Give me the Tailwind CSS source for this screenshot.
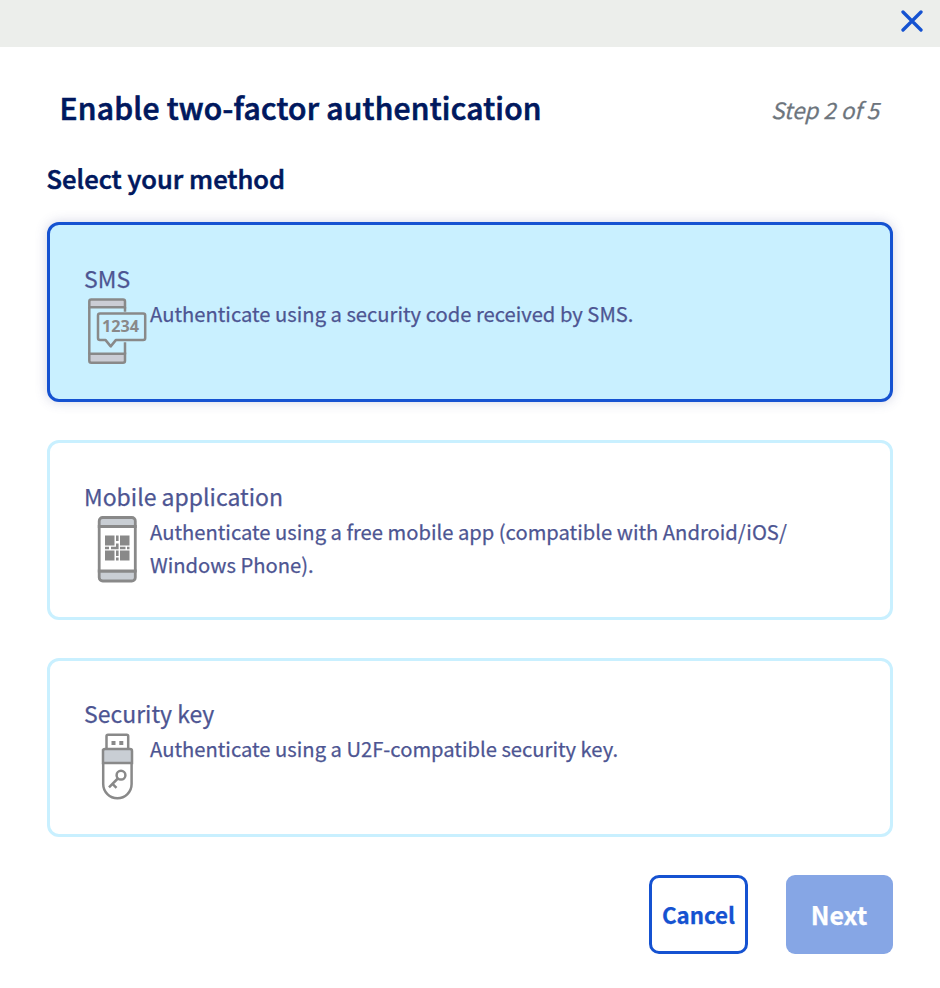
<!DOCTYPE html>
<html lang="en">
<head>
<meta charset="utf-8">
<title>Enable two-factor authentication</title>
<script src="https://cdn.jsdelivr.net/npm/@tailwindcss/browser@4"></script>
</head>
<body class="h-[988px] overflow-hidden bg-white font-['Noto_Sans_CJK_SC','Noto_Sans',sans-serif] text-[#4d5592] [-webkit-text-stroke:0.25px]">
<header class="flex h-[47px] items-start justify-end bg-[#eceeeb] pr-[17px] pt-[10px]">
  <button aria-label="Close"><svg class="block size-[22px]" viewBox="0 0 22 22" fill="none" stroke="#1552d1" stroke-width="3.3" stroke-linecap="round"><path d="M2 2 20 20M20 2 2 20"/></svg></button>
</header>
<main class="px-[47px] pt-[36px]">
  <div class="flex h-[48px] items-center justify-between px-[13px] whitespace-nowrap">
    <h1 class="-ml-[0.5px] text-[30px] leading-[48px] font-medium tracking-[0.24px] text-[#00185e] [-webkit-text-stroke:0.7px]">Enable two-factor authentication</h1>
    <span class="pt-[4px] pr-px text-[22.4px] leading-[40px] text-[#6d757d] italic">Step 2 of 5</span>
  </div>
  <h2 class="mt-[27px] -ml-[0.5px] text-[25.5px] leading-[40px] font-medium tracking-[0.04px] text-[#00185e] [-webkit-text-stroke:0.6px]">Select your method</h2>
  <div class="mt-[24px] flex flex-col gap-[38px]">
    <section class="h-[180px] rounded-[12px] border-3 border-[#1552d1] bg-[#c9f0ff] px-[34px] pt-[36px] shadow-[0_0_12px_rgba(77,85,146,0.25)]">
      <h3 class="mb-[2px] text-[23px] leading-[34px]">SMS</h3>
      <div class="flex">
        <svg class="block h-[70px] w-[66px] shrink-0" viewBox="0 0.8 66 70" fill="none" stroke="#898989" stroke-width="2.5">
          <path fill="#cbcdd5" d="M5.3 11V5.3a2 2 0 0 1 2-2H39a2 2 0 0 1 2 2V11ZM5.3 57.5h35.7v7a2 2 0 0 1-2 2H7.3a2 2 0 0 1-2-2Z"/>
          <path d="M5.3 11v47M41 11v4.5M41 46v12"/>
          <path stroke-linejoin="round" d="M16 17.2h43.200a2 2 0 0 1 2 2v22.500a2 2 0 0 1-2 2H32l-5.300 6.500-5.300-6.500H16a2 2 0 0 1-2-2V19.200a2 2 0 0 1 2-2Z"/>
          <text x="36.500" y="35.600" text-anchor="middle" textLength="37" lengthAdjust="spacingAndGlyphs" class="font-['Open_Sans',sans-serif] text-[16px] font-bold" fill="#898989" stroke="none">1234</text>
        </svg>
        <p class="text-[20.2px] leading-[33px]">Authenticate using a security code received by SMS.</p>
      </div>
    </section>
    <section class="h-[180px] rounded-[12px] border-3 border-[#c9f0ff] px-[34px] pt-[36px]">
      <h3 class="mb-[2px] text-[23px] leading-[34px]">Mobile application</h3>
      <div class="flex">
        <svg class="block h-[70px] w-[66px] shrink-0" viewBox="0 0.5 66 70" fill="none" stroke="#898989" stroke-width="2.8">
          <path fill="#c9ced4" d="M15.200 12V6.500a3.500 3.500 0 0 1 3.500-3.500H47.800a3.500 3.500 0 0 1 3.500 3.500V12ZM15.200 56.500h36.100v6.500a3.500 3.500 0 0 1-3.500 3.500H18.700a3.500 3.500 0 0 1-3.500-3.500Z"/>
          <path fill="#fff" d="M15.200 12h36.100v44.500H15.200Z"/>
          <path fill="#898989" stroke="none" d="M21 21h9.500v10H21ZM36 21h9.500v10H36ZM21 36h9.500v10H21ZM36 36h9.500v10H36ZM32 21h2.600v5.500H32ZM32 29h2.600v5.800h-7.600v-2.500h5ZM21 32.300h4v2.400h-4ZM36 32.300h5.500v2.400H36ZM43 32.300h2.500v2.400H43ZM32 36h2.600v5.500H32ZM32 43h2.600v3h-2.600Z"/>
        </svg>
        <p class="text-[20.2px] leading-[33px]">Authenticate using a free mobile app (compatible with Android/iOS/<br>Windows Phone).</p>
      </div>
    </section>
    <section class="h-[179px] rounded-[12px] border-3 border-[#c9f0ff] px-[34px] pt-[35px]">
      <h3 class="mb-[2px] text-[23px] leading-[34px]">Security key</h3>
      <div class="flex">
        <svg class="block h-[70px] w-[66px] shrink-0" viewBox="0 0 66 70" fill="none" stroke="#898989" stroke-width="2.500">
          <path d="M22.500 17V4.300a1.500 1.500 0 0 1 1.500-1.500H42.700a1.500 1.500 0 0 1 1.500 1.500V17"/>
          <path fill="#c9ced4" d="M19 17.200V31H48V19a2 2 0 0 0-2-2H21a2 2 0 0 0-2 2Z"/>
          <path d="M19.200 31v21a14.200 14.200 0 0 0 28.400 0V31"/>
          <path fill="#898989" stroke="none" d="M27.500 9h4v4h-4ZM35.300 9h4v4h-4Z"/>
          <circle cx="37" cy="43.200" r="4.400"/><path d="m33.800 46.500-8.800 8.800M28.500 51.800l4 4"/>
        </svg>
        <p class="text-[20.2px] leading-[33px]">Authenticate using a U2F-compatible security key.</p>
      </div>
    </section>
  </div>
  <div class="mt-[38px] flex justify-end gap-[38px] font-bold">
    <button class="h-[79px] w-[99px] rounded-[10px] border-3 border-[#1552d1] text-[22.3px] text-[#1552d1]">Cancel</button>
    <button class="h-[79px] w-[107px] rounded-[9px] bg-[#86a6e5] pr-px text-[25px] text-white">Next</button>
  </div>
</main>
</body>
</html>
